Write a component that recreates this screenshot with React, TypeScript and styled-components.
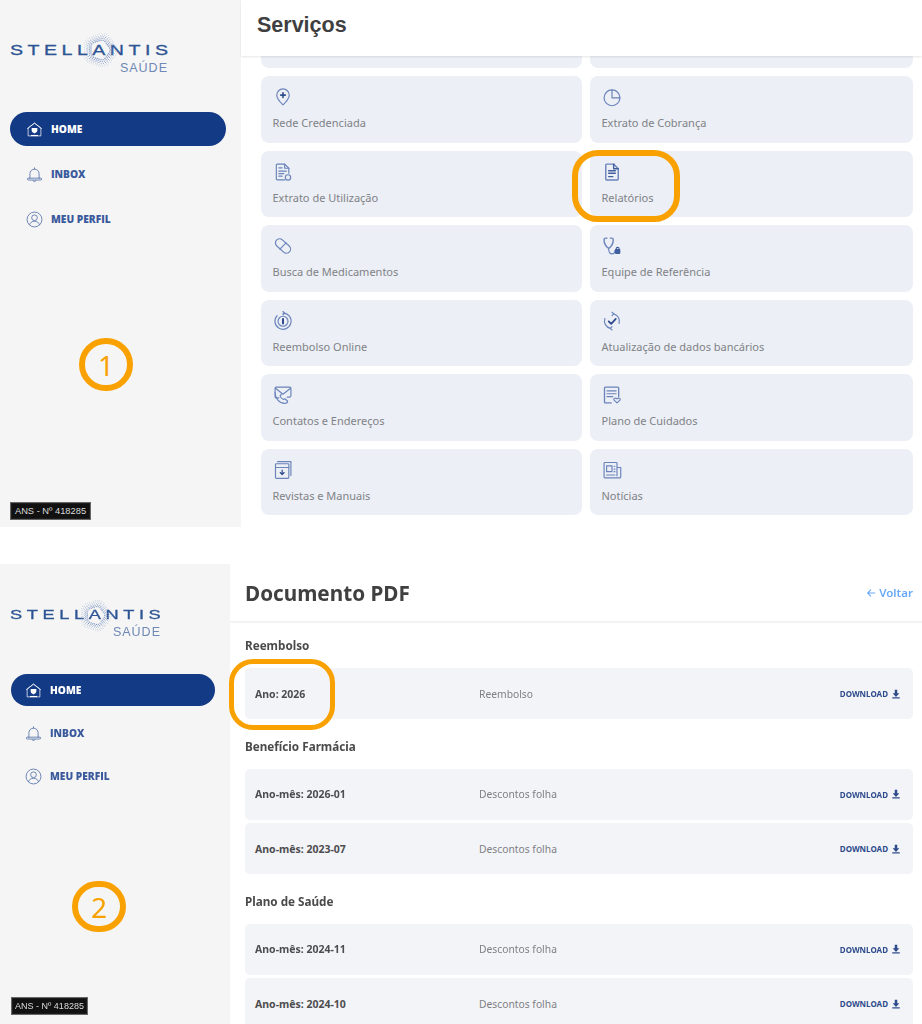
import React from "react";
import styled, { createGlobalStyle } from "styled-components";

const GlobalStyle = createGlobalStyle`
  html, body {
    margin: 0;
    padding: 0;
    background: #fff;
    font-family: "Noto Sans", "Open Sans", sans-serif;
  }
  * { box-sizing: border-box; }
`;

const Page = styled.div`
  width: 922px;
  height: 1024px;
  overflow: hidden;
  display: flex;
  flex-direction: column;
  gap: 37px;
  filter: blur(0.5px);
`;
const Panel = styled.section<{ $height: number }>`
  position: relative;
  display: flex;
  height: ${(p) => p.$height}px;
  overflow: hidden;
`;
const Sidebar = styled.aside<{ $width: number; $bottom: number; $left: number; $right: number }>`
  width: ${(p) => p.$width}px;
  flex: none;
  background: #f5f5f5;
  display: flex;
  flex-direction: column;
  padding: 0 ${(p) => p.$right}px ${(p) => p.$bottom}px ${(p) => p.$left}px;
`;
const Logo = styled.div<{ $width: number; $top: number; $size: number; $shift: number }>`
  position: relative;
  width: ${(p) => p.$width}px;
  margin-top: ${(p) => p.$top}px;
  margin-left: ${(p) => p.$shift}px;
  font-family: "Liberation Sans", Arial, sans-serif;
  line-height: 1;
  font-size: ${(p) => p.$size}px;
`;
const LogoName = styled.div<{ $spacing: number }>`
  letter-spacing: ${(p) => p.$spacing}px;
  white-space: nowrap;
  color: #2d5494;
  -webkit-text-stroke: 0.3px #2d5494;
  transform: scaleX(1.35);
  transform-origin: left center;
`;
const LogoSub = styled.div<{ $size: number }>`
  margin-top: 4px;
  text-align: right;
  font-size: ${(p) => p.$size}px;
  letter-spacing: 1px;
  color: #6f88b6;
`;
const LogoRing = styled.svg<{ $x: number; $y: number; $d: number }>`
  position: absolute;
  left: ${(p) => p.$x}px;
  top: ${(p) => p.$y}px;
  width: ${(p) => p.$d}px;
  height: ${(p) => p.$d}px;
`;
const Nav = styled.nav<{ $top: number }>`
  display: flex;
  flex-direction: column;
  gap: 11px;
  margin-top: ${(p) => p.$top}px;
`;
const NavItem = styled.div<{ $active?: boolean; $height: number; $pad: number }>`
  height: ${(p) => p.$height}px;
  border-radius: ${(p) => p.$height / 2}px;
  display: flex;
  align-items: center;
  gap: 8px;
  padding-left: ${(p) => p.$pad}px;
  font-family: "Open Sans", "Noto Sans", sans-serif;
  font-size: 10.2px;
  font-weight: 800;
  background: ${(p) => (p.$active ? "#133a85" : "transparent")};
  color: ${(p) => (p.$active ? "#fff" : "#3a5a9c")};
`;
const NavGlyph = styled.svg`
  width: 17px;
  height: 17px;
  flex: none;
  fill: none;
  stroke: currentColor;
  stroke-width: 1;
`;
const AnsBadge = styled.div<{ $width: number; $size: number }>`
  margin-top: auto;
  width: ${(p) => p.$width}px;
  height: 18px;
  background: #111;
  border: 1px solid #666;
  outline: 1px solid #1c1c1c;
  outline-offset: -2px;
  color: #dcdcdc;
  font-family: "Liberation Sans", Arial, sans-serif;
  font-size: ${(p) => p.$size}px;
  line-height: 16px;
  text-align: center;
  white-space: nowrap;
`;
const Main = styled.main`
  flex: 1;
  min-width: 0;
  display: flex;
  flex-direction: column;
  background: #fff;
`;
const ServicesHeader = styled.header`
  height: 56px;
  flex: none;
  padding: 12px 0 0 16px;
  box-shadow: 0 1px 2px rgba(0, 0, 0, 0.1);
  position: relative;
  font-family: "Liberation Sans", Arial, sans-serif;
  font-size: 21.5px;
  font-weight: 700;
  line-height: 26px;
  color: #3f3f42;
`;
const ServiceGrid = styled.div`
  display: grid;
  grid-template-columns: 321px 323px;
  grid-template-rows: 12px repeat(6, 66.5px);
  column-gap: 8px;
  row-gap: 8px;
  padding-left: 20px;
`;
const ClippedCard = styled.div`
  background: #eceff5;
  border-radius: 0 0 8px 8px;
`;
const ServiceCard = styled.div`
  background: #eceff5;
  border-radius: 8px;
  padding: 11px 11px 0 11.5px;
  display: flex;
  flex-direction: column;
`;
const ServiceGlyph = styled.svg`
  width: 20px;
  height: 20px;
  flex: none;
  fill: none;
  stroke: #6b84bb;
  stroke-width: 1.4;
  stroke-linecap: round;
  stroke-linejoin: round;
`;
const ServiceLabel = styled.div`
  margin-top: 8px;
  font-size: 11px;
  line-height: 16px;
  color: #808287;
  white-space: nowrap;
`;
const DocHeader = styled.header`
  height: 59px;
  flex: none;
  display: flex;
  align-items: center;
  justify-content: space-between;
  padding: 0 9px 0 15px;
  border-bottom: 2px solid #f3f3f3;
`;
const DocTitle = styled.h1`
  margin: 0;
  font-size: 20.7px;
  font-weight: 700;
  color: #404040;
`;
const BackLink = styled.span`
  display: flex;
  align-items: center;
  gap: 3px;
  font-size: 11.5px;
  font-weight: 600;
  color: #6aa8fa;
  white-space: nowrap;
`;
const BackGlyph = styled.svg`
  width: 10px;
  height: 10px;
  fill: none;
  stroke: #6aa8fa;
  stroke-width: 2.6;
`;
const DocBody = styled.div`
  padding: 13px 9px 0 15px;
  display: flex;
  flex-direction: column;
`;
const GroupTitle = styled.h2`
  margin: 0 0 -3.5px;
  height: 32px;
  font-size: 11.7px;
  font-weight: 700;
  line-height: 19px;
  color: #4a4a4a;
`;
const Group = styled.div`
  display: flex;
  flex-direction: column;
  gap: 3.5px;
  margin-bottom: 17.5px;
`;
const DocRow = styled.div`
  height: 51px;
  flex: none;
  display: grid;
  grid-template-columns: 224px 1fr auto;
  align-items: center;
  padding: 0 12px 0 10px;
  background: #f3f4f8;
  border-radius: 5px;
`;
const RowName = styled.span`
  font-size: 10.5px;
  font-weight: 700;
  color: #4d4d4f;
`;
const RowKind = styled.span`
  font-size: 10.3px;
  color: #7f8084;
`;
const DownloadLink = styled.span`
  display: flex;
  align-items: center;
  gap: 3px;
  font-size: 8px;
  font-weight: 700;
  color: #2e4b8c;
`;
const DownloadGlyph = styled.svg`
  width: 10px;
  height: 10px;
  fill: #2e4b8c;
`;
const Callout = styled.div<{ $x: number; $y: number; $w: number; $h: number; $r: number; $stroke: number }>`
  position: absolute;
  left: ${(p) => p.$x}px;
  top: ${(p) => p.$y}px;
  width: ${(p) => p.$w}px;
  height: ${(p) => p.$h}px;
  border: ${(p) => p.$stroke}px solid #f9a100;
  border-radius: ${(p) => p.$r}px;
  display: flex;
  align-items: center;
  justify-content: center;
  color: #f9a100;
  font-family: "Noto Sans", sans-serif;
  font-size: 28px;
  line-height: 1;
`;

const ringDots = (cx: number, cy: number) => {
  const dots: { x: number; y: number; r: number }[] = [];
  [17, 20, 23, 26, 29].forEach((radius, ring) => {
    const count = 30 + ring * 4;
    for (let i = 0; i < count; i++) {
      const a = (i / count) * Math.PI * 2 + ring * 0.08;
      dots.push({
        x: cx + Math.cos(a) * radius * (1 + 0.06 * Math.cos(a * 5)),
        y: cy + Math.sin(a) * radius * (1 + 0.06 * Math.cos(a * 5)),
        r: 1.25 - ring * 0.17,
      });
    }
  });
  return dots;
};

const BrandLogo = ({ big }: { big: boolean }) => (
  <Logo $width={big ? 158 : 151} $top={big ? 43 : 44} $size={big ? 14.5 : 13.5} $shift={big ? 0 : -1}>
    <LogoName $spacing={big ? 3.33 : 3.4}>STELLANTIS</LogoName>
    <LogoSub $size={12.5}>SAÚDE</LogoSub>
    <LogoRing viewBox="0 0 64 64" $x={big ? 72 : 69} $y={big ? -11 : -9} $d={big ? 36 : 33}>
      {ringDots(32, 32).map((d, i) => (
        <circle key={i} cx={d.x} cy={d.y} r={d.r} fill="#7f97c4" />
      ))}
    </LogoRing>
  </Logo>
);

const HomeIcon = () => (
  <NavGlyph viewBox="0 0 24 24">
    <path d="M3 10 12 3l9 7v11H3z" />
    <path d="M1.500 11 12 3l10.500 8" />
    <path d="M8 10h8v3.500c0 2-2 3-4 4-2-1-4-2-4-4z" fill="currentColor" stroke="none" />
    <path d="M7 20.500h10" strokeWidth="1.600" />
  </NavGlyph>
);
const BellIcon = () => (
  <NavGlyph viewBox="0 0 24 24">
    <path d="M5.500 18v-7a6.500 6.500 0 0 1 13 0v7" />
    <path d="M2 18.200c0-.6.500-1 1-1h18c.500 0 1 .4 1 1v.6c0 .6-.5 1-1 1H3c-.5 0-1-.4-1-1z" />
    <path d="M10 20c.3 1.400 1 2 2 2s1.700-.6 2-2M12 2v2.500" />
  </NavGlyph>
);
const ProfileIcon = () => (
  <NavGlyph viewBox="0 0 24 24">
    <circle cx="12" cy="12" r="10.500" />
    <circle cx="12" cy="9.500" r="4" />
    <path d="M5 19.500c1-3.500 3.500-5 7-5s6 1.500 7 5" />
  </NavGlyph>
);

const serviceIcons: Record<string, React.ReactNode> = {
  pin: (
    <>
      <path d="M12 21.500C8 17.500 4.500 14 4.500 9.800a7.500 7.500 0 0 1 15 0c0 4.200-3.500 7.700-7.500 11.700z" />
      <path d="M12 7v5.500M9.200 9.700h5.600" stroke="#2e4b8c" strokeWidth="1.900" />
    </>
  ),
  pie: (
    <>
      <path d="M12 3.500a9.500 9.500 0 1 0 9.500 9.500" />
      <path d="M12 3.500A9.500 9.500 0 0 1 21.500 13H12z" />
    </>
  ),
  usage: (
    <>
      <path d="M14 2.500H5a1 1 0 0 0-1 1v17a1 1 0 0 0 1 1h9M14 2.500l5 5v6" />
      <path d="M14 2.500v5h5M7 7h4M7 11h9M7 14h6M7 17h4" />
      <circle cx="18" cy="18.500" r="3.200" />
    </>
  ),
  report: (
    <>
      <path d="M14 2.500H5.500a1 1 0 0 0-1 1v17a1 1 0 0 0 1 1h13a1 1 0 0 0 1-1V8z" strokeWidth="1.700" />
      <path d="M14 2.500V8h5.500M8 10.500h8M8 13.500h8M8 17.500h5" stroke="#3f5f9f" strokeWidth="1.700" />
    </>
  ),
  pill: (
    <>
      <rect x="1.500" y="7" width="21" height="10" rx="5" transform="rotate(42 12 12)" />
      <path d="M8.300 15.700 15.700 8.300" />
    </>
  ),
  team: (
    <>
      <path d="M6 2.500H4.500a2 2 0 0 0-2 2C2.500 9 5 13 8 15c3-2 5.500-6 5.500-10.500a2 2 0 0 0-2-2H10" strokeWidth="1.700" />
      <path d="M8 15c0 4 1.500 6.500 4 6.500s3.500-2 3.500-4" />
      <rect x="15.500" y="15.500" width="6.500" height="6" rx="1" fill="#3f5f9f" stroke="none" />
      <path d="M17 15.500c0-2.600 3.500-2.600 3.500 0" stroke="#3f5f9f" />
    </>
  ),
  refund: (
    <>
      <path d="M12 2.500a9.700 9.700 0 1 1-7 3" />
      <path d="M12 .5 14 2.500 12 4.500" />
      <circle cx="12" cy="12.300" r="6" />
      <path d="M12 9.500v5.600" stroke="#2e4b8c" strokeWidth="2.400" />
    </>
  ),
  bank: (
    <>
      <path d="M14 3.500a9 9 0 0 1 6.500 11.500M10 20.800A9 9 0 0 1 3.500 9" />
      <path d="M12 1.500l2.200 2L12 5.500M12 18.800l-2 2 2 2" />
      <path d="M8 12.500l3 3 5.500-6" stroke="#2e4b8c" strokeWidth="2.100" />
    </>
  ),
  contact: (
    <>
      <path d="M7 15.500H4a1.500 1.500 0 0 1-1.500-1.500V4A1.500 1.500 0 0 1 4 2.500h16A1.500 1.500 0 0 1 21.500 4v9a1.500 1.500 0 0 1-1.500 1.500h-3" />
      <path d="M3 4l9 7 9-7" />
      <path d="M2.500 9c0 7 5 13 11.500 13 2 0 3.500-1 3.500-2.500l-3-3-2 1c-2-1-3.500-2.500-4-4.500l1.500-2" />
    </>
  ),
  care: (
    <>
      <path d="M11 21.500H4a1 1 0 0 1-1-1v-17a1 1 0 0 1 1-1h15a1 1 0 0 1 1 1V14" strokeWidth="1.600" />
      <path d="M6 7h11M6 10.500h11M6 14h7" />
      <path d="M18 21.500l-3.500-3.300c-1.200-1.600.9-3.600 3.500-1.700 2.600-1.900 4.700.1 3.500 1.700z" />
    </>
  ),
  mag: (
    <>
      <rect x="3" y="4.500" width="16" height="17.500" rx="1" />
      <path d="M5.500 2h16v16.500M3 9h16" />
      <path d="M11 12v5M8.700 15l2.300 2.500 2.300-2.500" stroke="#2e4b8c" />
    </>
  ),
  news: (
    <>
      <path d="M18 19V4a1 1 0 0 0-1-1H3.500a1 1 0 0 0-1 1v16a1.500 1.500 0 0 0 1.500 1.500h17a1.500 1.500 0 0 0 1.500-1.500V9H18" />
      <rect x="5.500" y="7" width="6.500" height="7" />
      <path d="M14.500 7.500h1M14.500 11h1M14.500 14h1M5.500 18h10" />
    </>
  ),
};

const services = [
  { icon: "pin", label: "Rede Credenciada" },
  { icon: "pie", label: "Extrato de Cobrança" },
  { icon: "usage", label: "Extrato de Utilização" },
  { icon: "report", label: "Relatórios" },
  { icon: "pill", label: "Busca de Medicamentos" },
  { icon: "team", label: "Equipe de Referência" },
  { icon: "refund", label: "Reembolso Online" },
  { icon: "bank", label: "Atualização de dados bancários" },
  { icon: "contact", label: "Contatos e Endereços" },
  { icon: "care", label: "Plano de Cuidados" },
  { icon: "mag", label: "Revistas e Manuais" },
  { icon: "news", label: "Notícias" },
];

const documents = [
  { title: "Reembolso", rows: [{ name: "Ano: 2026", kind: "Reembolso" }] },
  {
    title: "Benefício Farmácia",
    rows: [
      { name: "Ano-mês: 2026-01", kind: "Descontos folha" },
      { name: "Ano-mês: 2023-07", kind: "Descontos folha" },
    ],
  },
  {
    title: "Plano de Saúde",
    rows: [
      { name: "Ano-mês: 2024-11", kind: "Descontos folha" },
      { name: "Ano-mês: 2024-10", kind: "Descontos folha" },
    ],
  },
];

const SideMenu = ({ big }: { big: boolean }) => {
  const height = big ? 34 : 32;
  const pad = big ? 16 : 14;
  return (
    <Nav $top={big ? 38 : 36}>
      <NavItem $active $height={height} $pad={pad}>
        <HomeIcon />
        HOME
      </NavItem>
      <NavItem $height={height} $pad={pad}>
        <BellIcon />
        INBOX
      </NavItem>
      <NavItem $height={height} $pad={pad}>
        <ProfileIcon />
        MEU PERFIL
      </NavItem>
    </Nav>
  );
};

const App = () => {
  return (
    <Page>
      <GlobalStyle />
      <Panel $height={527}>
        <Sidebar $width={241} $bottom={7} $left={10} $right={15}>
          <BrandLogo big />
          <SideMenu big />
          <AnsBadge $width={81} $size={9.3}>ANS - Nº 418285</AnsBadge>
        </Sidebar>
        <Main>
          <ServicesHeader>Serviços</ServicesHeader>
          <ServiceGrid>
            <ClippedCard />
            <ClippedCard />
            {services.map((s) => (
              <ServiceCard key={s.label}>
                <ServiceGlyph viewBox="0 0 24 24">{serviceIcons[s.icon]}</ServiceGlyph>
                <ServiceLabel>{s.label}</ServiceLabel>
              </ServiceCard>
            ))}
          </ServiceGrid>
        </Main>
        <Callout $x={79} $y={338} $w={54} $h={53} $r={27} $stroke={6}>
          1
        </Callout>
        <Callout $x={572} $y={150} $w={108} $h={72} $r={26} $stroke={6} />
      </Panel>
      <Panel $height={460}>
        <Sidebar $width={230} $bottom={9} $left={11} $right={15}>
          <BrandLogo big={false} />
          <SideMenu big={false} />
          <AnsBadge $width={77} $size={9}>ANS - Nº 418285</AnsBadge>
        </Sidebar>
        <Main>
          <DocHeader>
            <DocTitle>Documento PDF</DocTitle>
            <BackLink>
              <BackGlyph viewBox="0 0 24 24">
                <path d="M22 12H4M12 4l-8 8 8 8" />
              </BackGlyph>
              Voltar
            </BackLink>
          </DocHeader>
          <DocBody>
            {documents.map((g) => (
              <Group key={g.title}>
                <GroupTitle>{g.title}</GroupTitle>
                {g.rows.map((r) => (
                  <DocRow key={r.name}>
                    <RowName>{r.name}</RowName>
                    <RowKind>{r.kind}</RowKind>
                    <DownloadLink>
                      DOWNLOAD
                      <DownloadGlyph viewBox="0 0 24 24">
                        <path d="M9 2h6v8h5l-8 9-8-9h5zM3 20h18v3H3z" />
                      </DownloadGlyph>
                    </DownloadLink>
                  </DocRow>
                ))}
              </Group>
            ))}
          </DocBody>
        </Main>
        <Callout $x={72} $y={317} $w={54} $h={51} $r={27} $stroke={6}>
          2
        </Callout>
        <Callout $x={229} $y={95} $w={106} $h={71} $r={24} $stroke={5} />
      </Panel>
    </Page>
  );
};

export default App;
